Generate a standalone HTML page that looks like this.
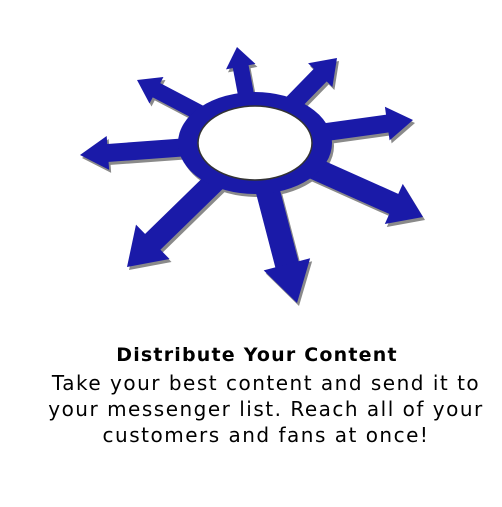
<!DOCTYPE html>
<html><head><meta charset="utf-8"><style>
html,body{margin:0;padding:0;background:#fff;width:502px;height:507px;overflow:hidden;position:relative}
svg{position:absolute;left:0;top:0}
.t{position:absolute;left:0;width:532px;text-align:center;font-family:"DejaVu Sans","Liberation Sans",sans-serif;font-size:20px;letter-spacing:1.5px;color:#000;white-space:nowrap}
</style></head><body>
<svg width="502" height="330" viewBox="0 0 502 330">
<defs>
<g id="arrows">
<g transform="translate(237,47) rotate(-100.7)"><rect x="-97" y="-8" width="80" height="16"/><polygon points="0,0 -20,-15 -20,15"/></g>
<g transform="translate(337,58) rotate(-45.7)"><rect x="-117" y="-9" width="98" height="18"/><polygon points="0,0 -24,-17 -24,17"/></g>
<g transform="translate(413,120) rotate(-7.9)"><rect x="-160" y="-9" width="140" height="18"/><polygon points="0,0 -26,-17 -26,17"/></g>
<g transform="translate(423,217) rotate(24.1)"><rect x="-184" y="-11" width="158" height="22"/><polygon points="0,0 -32,-22 -32,22"/></g>
<g transform="translate(297,303) rotate(75.4)"><rect x="-166" y="-12" width="132" height="24"/><polygon points="0,0 -40,-24 -40,24"/></g>
<g transform="translate(127,267) rotate(135.7)"><rect x="-179" y="-11" width="149" height="22"/><polygon points="0,0 -36,-24 -36,24"/></g>
<g transform="translate(80,155) rotate(175.8)"><rect x="-175" y="-9" width="152" height="18"/><polygon points="0,0 -28,-17 -28,17"/></g>
<g transform="translate(137,80) rotate(-152.3)"><rect x="-133" y="-8" width="115" height="16"/><polygon points="0,0 -22,-15 -22,15"/></g>
<ellipse cx="255" cy="143" rx="77" ry="51"/>
</g>
</defs>
<use href="#arrows" fill="#8a8a8a" transform="translate(2,3)"/>
<use href="#arrows" fill="#1a1aa8"/>
<ellipse cx="255" cy="143" rx="57" ry="37" fill="#fff" stroke="#333" stroke-width="1.5"/>
</svg>
<div class="t" style="top:344px;font-weight:bold;font-size:19px;letter-spacing:1.2px;width:514px">Distribute Your Content</div>
<div class="t" style="top:371px">Take your best content and send it to</div>
<div class="t" style="top:397px">your messenger list. Reach all of your</div>
<div class="t" style="top:423px">customers and fans at once!</div>
</body></html>
